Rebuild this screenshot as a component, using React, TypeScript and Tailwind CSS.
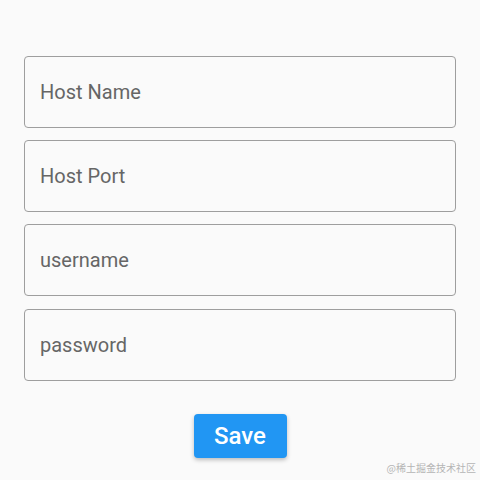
export default function App() {
  const fields = ["Host Name", "Host Port", "username", "password"]

  return (
    <div className="relative h-[480px] w-[480px] overflow-hidden bg-[#fafafa] font-['Roboto',sans-serif]">
      <div className="flex flex-col gap-[12.4px] px-6 pt-[55.5px]">
        {fields.map((label) => (
          <div
            key={label}
            className="flex h-[72px] items-center rounded-[4px] border border-[#9e9e9e] px-[15px] text-[20px] text-[#666666]"
          >
            {label}
          </div>
        ))}
      </div>

      <div className="mt-[33px] flex justify-center">
        <button className="h-[44px] w-[93px] rounded-[4px] bg-[#2196f3] text-[24px] font-medium text-white shadow-[0_2px_4px_rgba(0,0,0,0.25)]">
          Save
        </button>
      </div>

      {/* watermark */}
      <div className="absolute bottom-[5px] right-[4px] font-['Noto_Sans_CJK_SC',sans-serif] text-[10px] text-[#b5b5b5]">
        @稀土掘金技术社区
      </div>
    </div>
  )
}
